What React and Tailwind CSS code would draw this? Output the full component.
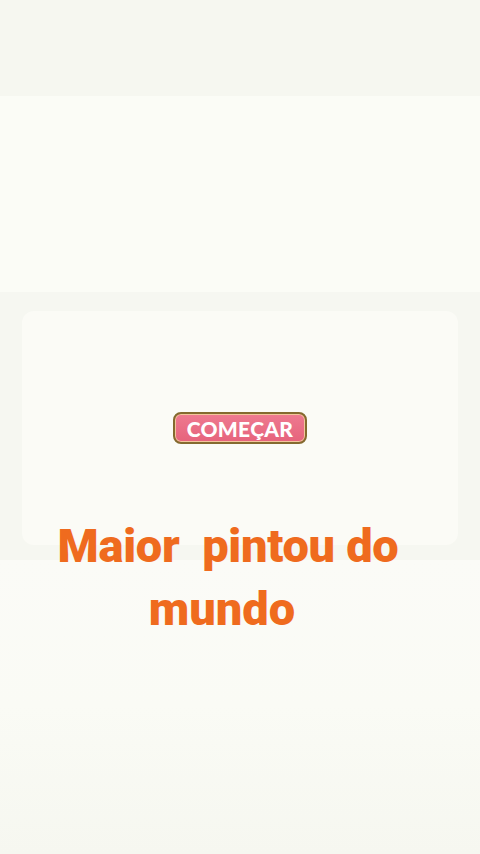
import React from 'react';

export default function App() {
  return (
    <div className="min-h-[854px] w-full flex flex-col bg-[#f8f9f3]" style={{ fontFamily: 'Roboto, "Liberation Sans", sans-serif' }}>
      {/* top bands */}
      <div className="h-[96px] bg-[#f6f7f0]" />
      <div className="h-[196px] bg-[#fbfcf6]" />

      {/* card section */}
      <section className="bg-[#f6f7f1] px-[22px] pt-[19px] pb-[15px]">
        <div className="h-[234px] rounded-xl bg-[#fbfbf6] flex items-center justify-center">
          <button className="h-[32px] w-[134px] rounded-[8px] border-2 border-[#846a2e] bg-gradient-to-b from-[#ee7a90] to-[#e6637c] shadow-[inset_0_0_0_1px_#f2c59c] flex items-center justify-center">
            <span
              className="text-white font-black text-[21px] leading-none tracking-[0.3px]"
              style={{ fontFamily: 'Lato, "Open Sans", sans-serif' }}
            >
              COMEÇAR
            </span>
          </button>
        </div>
      </section>

      {/* headline */}
      <div className="flex-1 bg-gradient-to-b from-[#fbfbf7] via-[#fafbf5] to-[#f6f7f0]">
        <h1 className="-mt-[46px] text-center font-black text-[47px] leading-[63px] text-[#ef6b1e] whitespace-pre">
          <span className="block pr-[24px] tracking-[-0.3px]">{'Maior  pintou do'}</span>
          <span className="block pr-[36px]">mundo</span>
        </h1>
      </div>
    </div>
  );
}
